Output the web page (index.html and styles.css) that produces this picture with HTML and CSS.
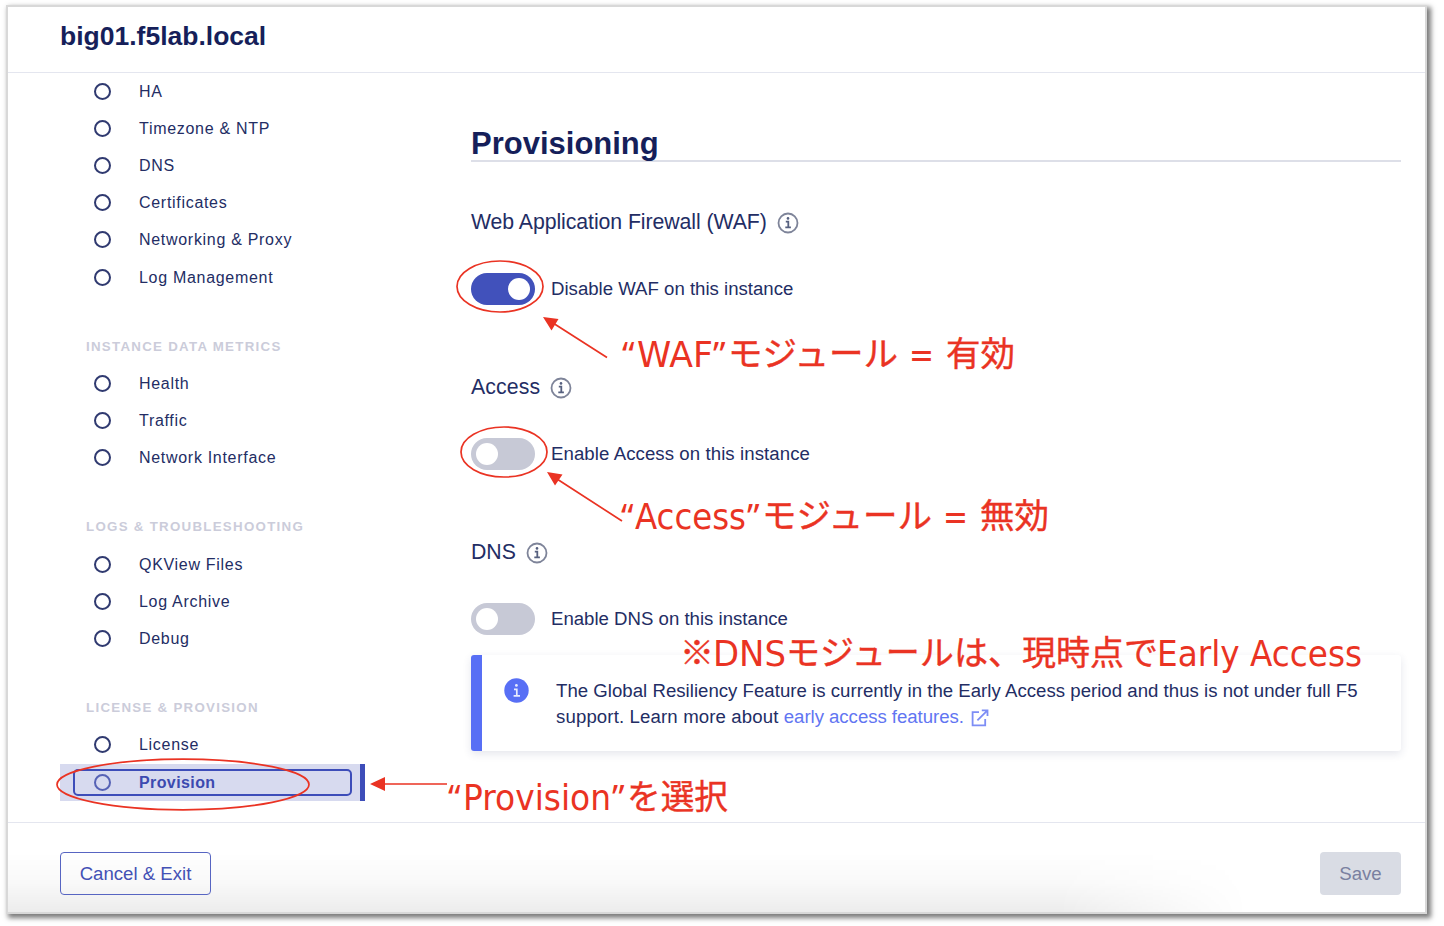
FILE: index.html
```html
<!DOCTYPE html>
<html lang="ja">
<head>
<meta charset="utf-8">
<title>big01.f5lab.local</title>
<link rel="stylesheet" href="styles.css">
</head>
<body>
<div class="window">
  <header class="topbar"><h1 class="host">big01.f5lab.local</h1></header>
  <div class="body">
    <nav class="sidebar">
      <ul class="group">
        <li class="item"><span class="dot"></span>HA</li>
        <li class="item"><span class="dot"></span>Timezone &amp; NTP</li>
        <li class="item"><span class="dot"></span>DNS</li>
        <li class="item"><span class="dot"></span>Certificates</li>
        <li class="item"><span class="dot"></span>Networking &amp; Proxy</li>
        <li class="item"><span class="dot"></span>Log Management</li>
      </ul>
      <ul class="group">
        <li class="caption">INSTANCE DATA METRICS</li>
        <li class="item"><span class="dot"></span>Health</li>
        <li class="item"><span class="dot"></span>Traffic</li>
        <li class="item"><span class="dot"></span>Network Interface</li>
      </ul>
      <ul class="group">
        <li class="caption">LOGS &amp; TROUBLESHOOTING</li>
        <li class="item"><span class="dot"></span>QKView Files</li>
        <li class="item"><span class="dot"></span>Log Archive</li>
        <li class="item"><span class="dot"></span>Debug</li>
      </ul>
      <ul class="group">
        <li class="caption">LICENSE &amp; PROVISION</li>
        <li class="item"><span class="dot"></span>License</li>
        <li class="item selected"><span class="focus"><span class="dot"></span>Provision</span></li>
      </ul>
    </nav>
    <main class="content">
      <h2 class="heading">Provisioning</h2>
      <section class="module waf">
        <h3 class="name">Web Application Firewall (WAF)
          <svg class="info" viewBox="0 0 22 22"><circle cx="11" cy="11" r="9.5"/><path d="M8.8 9.6h2.5v5.6M8.3 15.4h5.6"/><circle class="fill" cx="11" cy="6.4" r="1.3"/></svg></h3>
        <div class="row"><span class="toggle on"></span>Disable WAF on this instance</div>
      </section>
      <section class="module access">
        <h3 class="name">Access
          <svg class="info" viewBox="0 0 22 22"><circle cx="11" cy="11" r="9.5"/><path d="M8.8 9.6h2.5v5.6M8.3 15.4h5.6"/><circle class="fill" cx="11" cy="6.4" r="1.3"/></svg></h3>
        <div class="row"><span class="toggle"></span>Enable Access on this instance</div>
      </section>
      <section class="module">
        <h3 class="name">DNS
          <svg class="info" viewBox="0 0 22 22"><circle cx="11" cy="11" r="9.5"/><path d="M8.8 9.6h2.5v5.6M8.3 15.4h5.6"/><circle class="fill" cx="11" cy="6.4" r="1.3"/></svg></h3>
        <div class="row"><span class="toggle"></span>Enable DNS on this instance</div>
      </section>
      <div class="alert">
        <svg class="badge" viewBox="0 0 25 25"><circle cx="12.5" cy="12.5" r="12.2"/><path d="M10 11.3h2.8v6M9.6 17.8h6.4"/><circle class="pip" cx="12.4" cy="7.4" r="1.4"/></svg>
        <p class="note">The Global Resiliency Feature is currently in the Early Access period and thus is not under full F5<br><span class="lead">support. Learn more about</span> <a class="link">early access features.<svg class="ext" viewBox="0 0 18 18"><path d="M8 3.2H1.6v13.2h12.6V10M6.4 11.4L16.2 1.6M10.8 1.4h5.7v5.7"/></svg></a></p>
      </div>
    </main>
  </div>
  <footer class="footer">
    <button class="btn outline">Cancel &amp; Exit</button>
    <button class="btn disabled">Save</button>
  </footer>
</div>
<svg class="markup" viewBox="0 0 1444 926">
  <g class="ring">
    <ellipse cx="500" cy="286.5" rx="43" ry="25.5"/>
    <ellipse cx="504" cy="452" rx="43" ry="25"/>
    <ellipse cx="183" cy="784.5" rx="126" ry="25.3"/>
    <path d="M553 323L607 357.500M557 479L622 521M382 784H447"/>
  </g>
  <path class="head" d="M543 317L558.500 319L551.500 330.500ZM547 472L562.500 474.500L555 485.500ZM370 784L385 777V791Z"/>
  <g class="words">
    <text class="q" x="622" y="367">“</text>
    <text x="637" y="367" textLength="76" lengthAdjust="spacingAndGlyphs">WAF</text>
    <text class="q" x="713" y="367">”</text>
    <text class="ja" x="728" y="366" textLength="170" lengthAdjust="spacingAndGlyphs">モジュール</text>
    <text x="909" y="367" textLength="25" lengthAdjust="spacingAndGlyphs">=</text>
    <text class="ja" x="946" y="366" textLength="69" lengthAdjust="spacingAndGlyphs">有効</text>
    <text class="q" x="621" y="529">“</text>
    <text x="635" y="529" textLength="111" lengthAdjust="spacingAndGlyphs">Access</text>
    <text class="q" x="747" y="529">”</text>
    <text class="ja" x="762" y="528" textLength="170" lengthAdjust="spacingAndGlyphs">モジュール</text>
    <text x="943" y="529" textLength="25" lengthAdjust="spacingAndGlyphs">=</text>
    <text class="ja" x="980" y="528" textLength="69" lengthAdjust="spacingAndGlyphs">無効</text>
    <text class="ja" x="680" y="665" textLength="34" lengthAdjust="spacingAndGlyphs">※</text>
    <text x="713" y="666" textLength="73" lengthAdjust="spacingAndGlyphs">DNS</text>
    <text class="ja" x="786" y="665" textLength="236" lengthAdjust="spacingAndGlyphs">モジュールは、</text>
    <text class="ja" x="1022" y="665" textLength="136" lengthAdjust="spacingAndGlyphs">現時点で</text>
    <text x="1157" y="666" textLength="205" lengthAdjust="spacingAndGlyphs">Early Access</text>
    <text class="q" x="448" y="810">“</text>
    <text x="463" y="810" textLength="148" lengthAdjust="spacingAndGlyphs">Provision</text>
    <text class="q" x="612" y="810">”</text>
    <text class="ja" x="627" y="809" textLength="101" lengthAdjust="spacingAndGlyphs">を選択</text>
  </g>
</svg>
</body>
</html>
```
FILE: styles.css
```css
* { box-sizing: border-box; margin: 0; padding: 0; }
body {
  position: relative;
  width: 1444px;
  height: 926px;
  overflow: hidden;
  background: #fff;
  padding: 5px 0 0 6px;
  font-family: "Liberation Sans", Arial, sans-serif;
  color: #232d64;
}
.window {
  position: relative;
  display: flex;
  flex-direction: column;
  width: 1421px;
  height: 909px;
  border: 2px solid #d8d8d8;
  background: #fff;
  box-shadow: 3px 3px 5px 1px rgba(0, 0, 0, .52);
}
.topbar {
  flex: none;
  height: 66px;
  padding: 14px 0 0 52px;
  border-bottom: 1px solid #e4e6ef;
}
.host { font-size: 26.500px; line-height: 30px; color: #161f5a; }
.body { flex: none; display: flex; height: 749px; }
.sidebar { flex: none; width: 357px; padding-left: 52px; margin-top: -0.500px; }
.group { list-style: none; margin-bottom: 32px; }
.item, .caption { display: flex; align-items: center; height: 37.200px; }
.item { padding-left: 34px; font-size: 16px; line-height: 19px; letter-spacing: .7px; }
.caption {
  padding: 0 0 0 26px;
  font-size: 13.300px;
  font-weight: bold;
  letter-spacing: 1.280px;
  color: #cbccda;
}
.dot {
  flex: none;
  width: 17px;
  height: 17px;
  margin-right: 28px;
  border: 2px solid #303a70;
  border-radius: 50%;
}
.item.selected {
  padding: 0 8px 0 13px;
  border-right: 5px solid #3d4db9;
  background: #d7daef;
  font-weight: bold;
  letter-spacing: .4px;
  color: #3c4ab0;
}
.focus {
  display: flex;
  align-items: center;
  width: 279px;
  height: 27px;
  padding-left: 19px;
  border: 2px solid #3d4db9;
  border-radius: 5px;
}
.selected .dot { border-color: #5662b5; }
.content { width: 930px; margin-left: 106px; }
.heading {
  height: 89px;
  padding-top: 53px;
  border-bottom: 2px solid #dddfe8;
  font-size: 31px;
  line-height: 36px;
  color: #161f5a;
}
.heading + .module { margin-top: 43px; }
.module { height: 165px; }
.name {
  display: flex;
  align-items: center;
  gap: 10px;
  height: 34px;
  font-size: 21.280px;
  font-weight: normal;
}
.waf .name { letter-spacing: -.07px; }
.access .name { letter-spacing: .12px; }
.access .row { letter-spacing: .08px; }
.info { width: 22px; height: 22px; margin-top: 2px; fill: none; stroke: #7e8499; stroke-width: 1.800; }
.info path { stroke: #56607f; }
.info .fill { fill: #56607f; stroke: none; }
.row {
  display: flex;
  align-items: center;
  gap: 16px;
  height: 32px;
  margin-top: 33.500px;
  font-size: 18.620px;
}
.toggle {
  display: flex;
  width: 64px;
  height: 32px;
  padding: 5px;
  border-radius: 16px;
  background: #c7c9d6;
}
.toggle::before { content: ""; width: 22px; height: 22px; border-radius: 50%; background: #fff; }
.toggle.on { justify-content: flex-end; background: #4151bb; }
.alert {
  display: flex;
  height: 96px;
  margin-top: -45px;
  padding: 23px 0 0 22px;
  border-left: 11px solid #586ff5;
  border-radius: 3px;
  box-shadow: 0 3px 8px rgba(40, 50, 100, .12);
}
.badge { flex: none; width: 25px; height: 25px; margin-right: 27px; fill: #586ff5; }
.badge path { fill: none; stroke: #e8ebff; stroke-width: 1.700; }
.badge .pip { fill: #e8ebff; }
.note { font-size: 18.620px; line-height: 26.400px; letter-spacing: .02px; white-space: nowrap; }
.lead { letter-spacing: .13px; }
.link { color: #6175f2; letter-spacing: -.04px; }
.ext { width: 18px; height: 18px; margin-left: 7px; vertical-align: -4px; fill: none; stroke: #7d8df5; stroke-width: 1.800; }
.footer {
  position: relative;
  flex: 1;
  display: flex;
  justify-content: space-between;
  align-items: flex-start;
  padding: 29px 24px 0 52px;
  border-top: 1px solid #e4e6ef;
}
.footer::before {
  content: "";
  position: absolute;
  inset: 30px 0 0 0;
  background: linear-gradient(to bottom, transparent, rgba(0, 0, 0, .022) 50%, rgba(0, 0, 0, .075));
  mask-image: linear-gradient(to right, #000 1050px, transparent 1240px);
}
.btn {
  position: relative;
  height: 43px;
  border: 0;
  border-radius: 4px;
  font: 18.620px "Liberation Sans", Arial, sans-serif;
}
.outline { width: 151px; border: 1.500px solid #5765c2; background: transparent; color: #4351b5; }
.disabled { width: 81px; background: #d9dce4; color: #7a80a0; }
.markup { position: absolute; left: 0; top: 0; width: 1444px; height: 926px; }
.ring { fill: none; stroke: #ea3323; stroke-width: 1.700; }
.head { fill: #ea3323; }
.words { fill: #ea3323; font: 35px "DejaVu Sans", sans-serif; }
.words .q { font-family: "Noto Sans", sans-serif; }
.words .ja { font: 34px "Noto Sans CJK JP", sans-serif; stroke: #ea3323; stroke-width: .4; }
```
